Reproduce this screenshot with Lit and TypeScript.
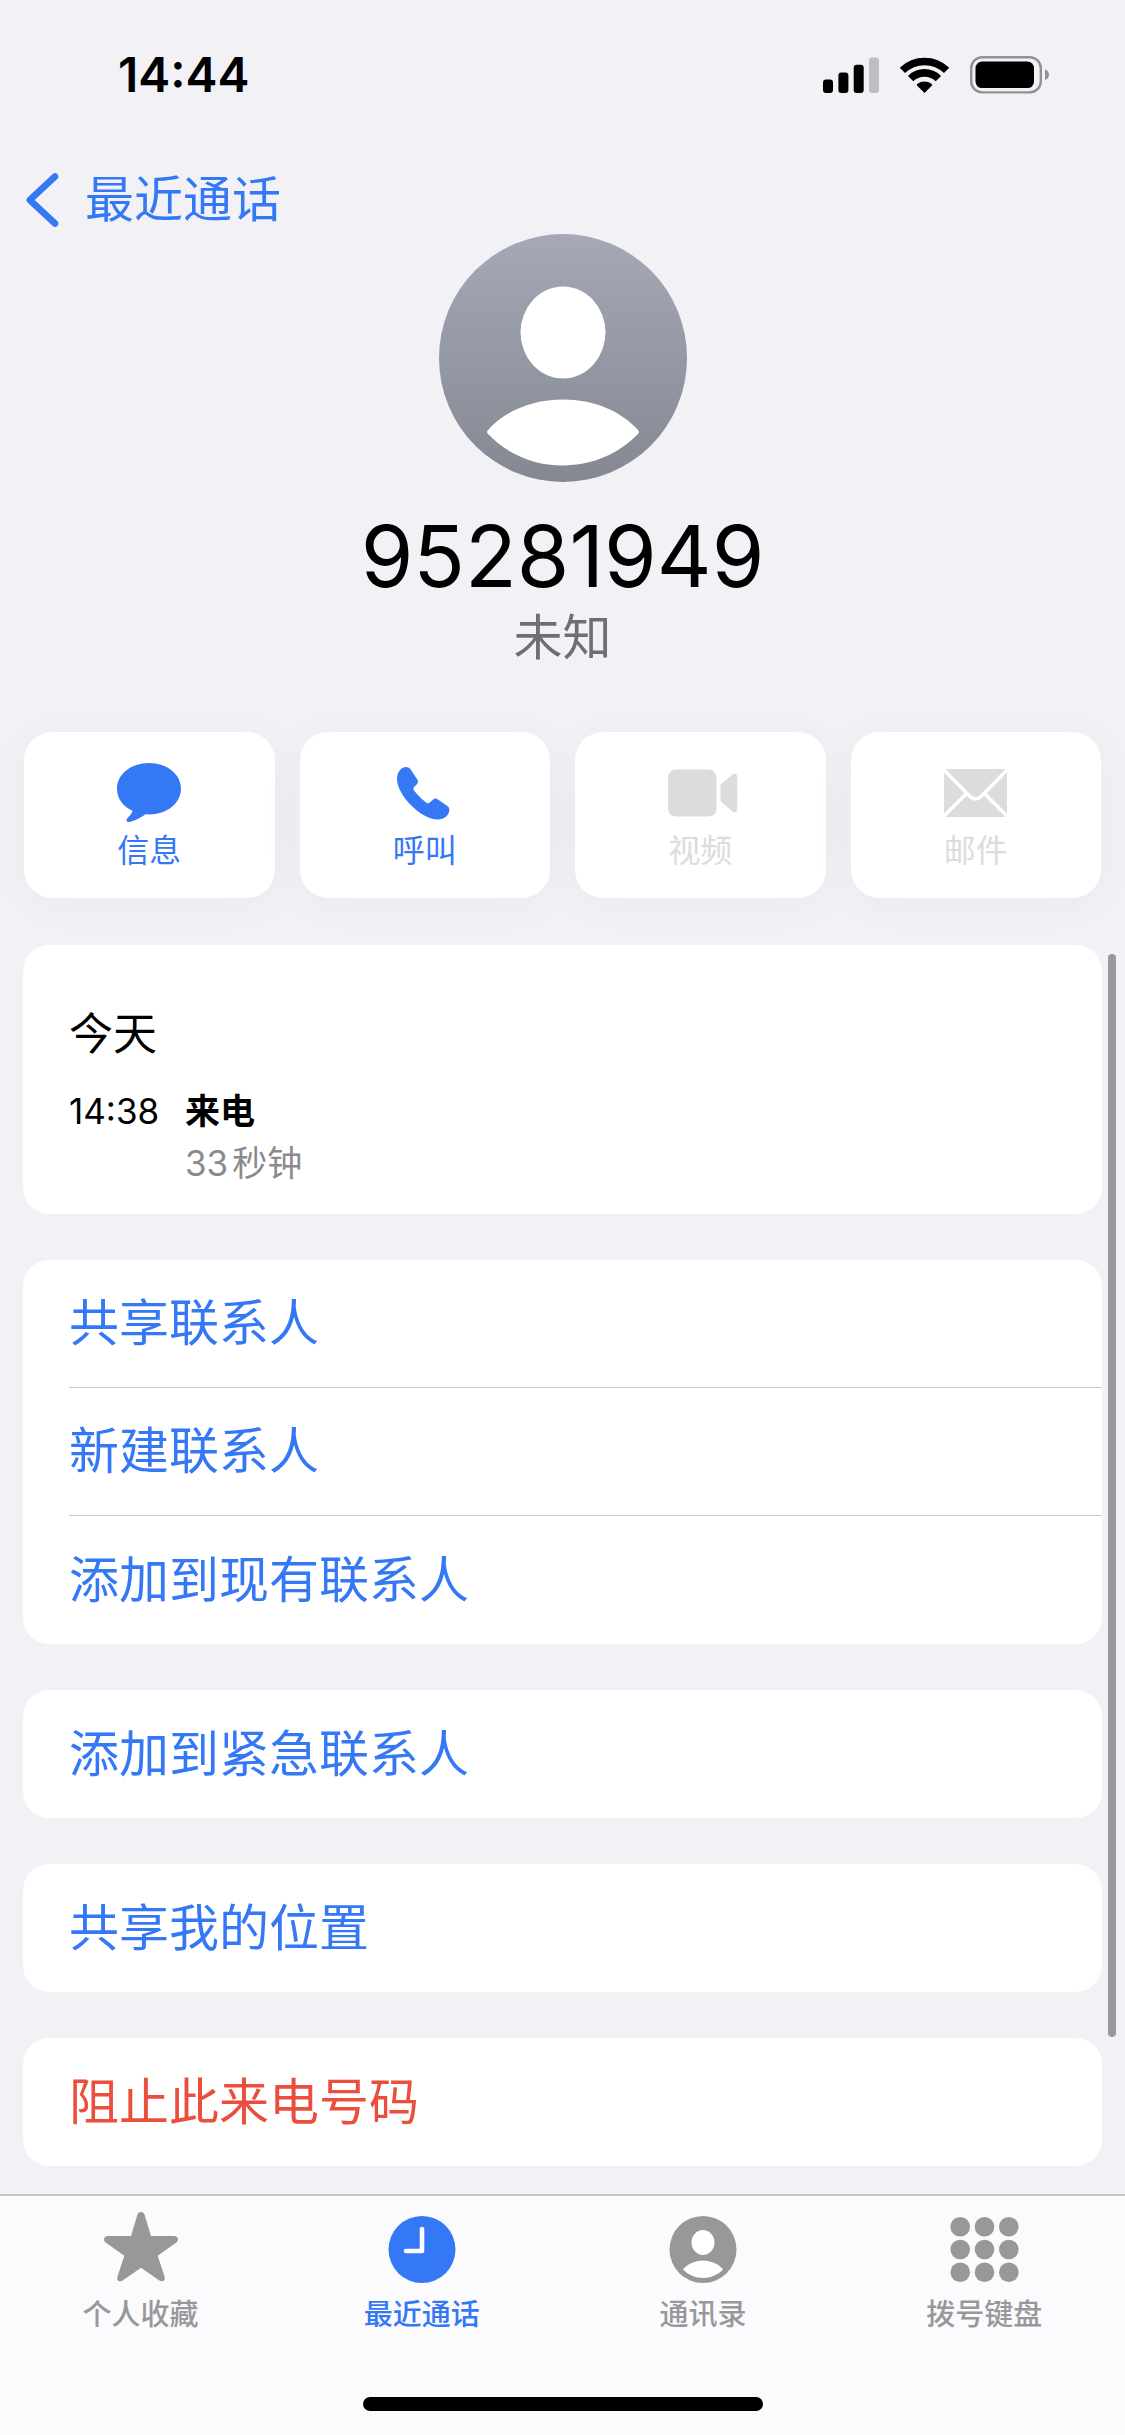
import { LitElement, html, css, svg } from "lit";
import { customElement } from "lit/decorators.js";
import { classMap } from "lit/directives/class-map.js";

const icons = {
  message: html`<svg width="64" height="60" viewBox="0 0 64 60" fill="currentColor" aria-hidden="true">
    <path d="M32 0C50 0 64 11.3 64 25.7S50 51.4 32 51.4c-1.200 0-2.300 0-3.400-.1C24 54.500 16.500 58.900 11.500 58.900c-2 0-2.700-1.700-1.500-3.200C11.800 53.500 14.500 51.500 15.600 47.800 6 43.400 0 35.600 0 25.700 0 11.300 14 0 32 0z"/>
  </svg>`,
  phone: html`<svg width="55" height="53" viewBox="0 0 55 53" fill="currentColor" aria-hidden="true">
    <path d="M9 0c2 0 3.800.9 5 2.900l6.300 9.600c1.100 1.800.8 3.300-.6 4.900L17.100 20c-.9 1-1 2-.3 3.100 2.300 3.600 9.200 10.400 12.800 12.800 1.100.7 2.200.6 3.100-.3l2.900-2.700c1.600-1.500 3.500-1.700 5.300-.5l9.100 6.300c2 1.300 2.600 3.100 2.300 5.100-.7 4.600-5.200 8.800-11.200 8.800C24 52.600 0 28 0 12 0 5 4 0 9 0z"/>
  </svg>`,
  video: html`<svg width="75" height="48" viewBox="-5 0 75 48" fill="currentColor" aria-hidden="true">
    <rect x="0" y="0.500" width="48.500" height="47" rx="8"/>
    <path d="M53.800 14.600c-.9.800-1.300 1.500-1.300 2.600v13.600c0 1.100.4 1.800 1.300 2.600L64 42.300c2.300 1.900 5.200 1 5.200-1.800v-33c0-2.800-2.900-3.700-5.200-1.800z"/>
  </svg>`,
  mail: html`<svg width="63" height="48" viewBox="0 0 63 48" aria-hidden="true">
    <rect width="63" height="48" rx="2" fill="currentColor"/>
    <g fill="none" stroke="#fff" stroke-width="3.600">
      <path d="M-2 -1L26 27.600q5.500 4.600 11 0L65 -1"/>
      <path d="M-2 49L22.500 24.500M65 49L40.500 24.500"/>
    </g>
  </svg>`,
  star: html`<svg width="74" height="76" viewBox="0 0 74 76" fill="currentColor" aria-hidden="true">
    <path d="M37 0C38.800 0 40 1 40.600 2.800L47 24H69.800C72.500 24 74 25.300 74 27.200 74 28.700 73.300 29.700 72 30.700L53.700 43.700 60.500 64.500C61.500 67.500 60 69.300 57.800 69.300 56.700 69.300 56 69 55 68.300L37 55.700 19 68.300C18 69 17.300 69.300 16.200 69.300 14 69.300 12.500 67.500 13.500 64.500L20.300 43.700 2 30.700C.7 29.700 0 28.700 0 27.200 0 25.300 1.500 24 4.200 24H27L33.400 2.800C34 1 35.200 0 37 0z"/>
  </svg>`,
  clock: html`<svg width="68" height="76" viewBox="0 0 68 76" aria-hidden="true">
    <circle cx="34" cy="37.500" r="33.500" fill="currentColor"/>
    <path d="M34 17V39H18" fill="none" stroke="#fff" stroke-width="4.600" stroke-linecap="round" stroke-linejoin="round"/>
  </svg>`,
  person: html`<svg width="68" height="76" viewBox="0 0 68 76" aria-hidden="true">
    <circle cx="34" cy="37.500" r="33.500" fill="currentColor"/>
    <ellipse cx="34" cy="30.500" rx="11.500" ry="12.500" fill="#fff"/>
    <path d="M14 57.500C18.500 52 26 48.500 34 48.500S49.500 52 54 57.500C48.500 63 41.500 66 34 66S19.500 63 14 57.500z" fill="#fff"/>
  </svg>`,
  keypad: html`<svg width="69" height="76" viewBox="0 0 69 76" fill="currentColor" aria-hidden="true">
    ${[0, 1, 2].map((r) => [0, 1, 2].map((c) => svg`<circle cx=${10.2 + c * 24.3} cy=${14.7 + r * 22.8} r="9.800"/>`))}
  </svg>`,
};

type IconName = keyof typeof icons;

interface Action {
  icon: IconName;
  label: string;
  disabled: boolean;
}

interface Tab {
  icon: IconName;
  label: string;
  href: string;
  current: boolean;
}

const actions: Action[] = [
  { icon: "message", label: "信息", disabled: false },
  { icon: "phone", label: "呼叫", disabled: false },
  { icon: "video", label: "视频", disabled: true },
  { icon: "mail", label: "邮件", disabled: true },
];

const groups: { label: string; danger?: boolean }[][] = [
  [{ label: "共享联系人" }, { label: "新建联系人" }, { label: "添加到现有联系人" }],
  [{ label: "添加到紧急联系人" }],
  [{ label: "共享我的位置" }],
  [{ label: "阻止此来电号码", danger: true }],
];

const tabs: Tab[] = [
  { icon: "star", label: "个人收藏", href: "#favorites", current: false },
  { icon: "clock", label: "最近通话", href: "#recents", current: true },
  { icon: "person", label: "通讯录", href: "#contacts", current: false },
  { icon: "keypad", label: "拨号键盘", href: "#keypad", current: false },
];

@customElement("app-root")
export class AppRoot extends LitElement {
  static styles = css`
    :host {
      --blue: #3478f6;
      --page: #f1f1f6;
      display: flex;
      flex-direction: column;
      min-height: 100vh;
      background: var(--page);
      color: #000;
      font-family: Inter, "Noto Sans CJK SC", sans-serif;
      font-size: 50px;
    }
    * {
      box-sizing: border-box;
    }
    svg {
      display: block;
      flex: none;
    }
    h1, h2, p, ul {
      margin: 0;
      padding: 0;
    }
    button {
      border: 0;
      margin: 0;
      background: none;
      font: inherit;
      color: inherit;
    }
    a {
      color: inherit;
      text-decoration: none;
    }

    .status {
      display: flex;
      align-items: center;
      justify-content: space-between;
      padding: 46px 76px 54px 118px;
      font-size: 48px;
      line-height: 58px;
      font-weight: 600;
    }
    .status-icons {
      display: flex;
      align-items: center;
      gap: 21px;
    }

    .nav {
      display: flex;
      padding: 8px 26px 0;
    }
    .back {
      display: flex;
      align-items: center;
      gap: 26px;
      font-size: 49px;
      line-height: 68px;
      color: var(--blue);
    }

    .hero {
      display: flex;
      flex-direction: column;
      align-items: center;
    }
    .number {
      margin-top: 24px;
      font-size: 85px;
      line-height: 102px;
      font-weight: 400;
    }
    .kind {
      font-size: 49px;
      line-height: 60px;
      color: #6f6f73;
    }

    .actions {
      display: grid;
      grid-template-columns: repeat(4, 1fr);
      gap: 25px;
      padding: 64px 24px 47px;
    }
    .action {
      display: flex;
      flex-direction: column;
      align-items: center;
      gap: 6px;
      padding: 29px 0 27px;
      border-radius: 28px;
      background: #fff;
      box-shadow: 0 6px 48px rgba(0, 0, 0, 0.04);
      color: var(--blue);
      font-size: 32px;
      line-height: 40px;
    }
    .action:disabled {
      color: #dcdcdc;
    }
    .action-icon {
      display: flex;
      align-items: center;
      height: 64px;
    }

    .content {
      flex: 1;
      position: relative;
      display: flex;
      flex-direction: column;
      gap: 46px;
      padding: 0 23px 28px;
    }
    .scrollbar {
      position: absolute;
      top: 9px;
      right: 9px;
      bottom: 157px;
      width: 8px;
      border-radius: 4px;
      background: #99999d;
    }
    .card {
      border-radius: 26px;
      background: #fff;
    }
    .log {
      padding: 60px 46px 25px;
    }
    .day {
      margin-bottom: 22px;
      font-size: 44px;
      line-height: 58px;
      font-weight: 400;
    }
    .call {
      display: grid;
      grid-template-columns: 116px 1fr;
      font-size: 35px;
      line-height: 52px;
    }
    .call-type {
      font-weight: 700;
    }
    .call-length {
      grid-column: 2;
      display: flex;
      gap: 4px;
      color: #8a8a8e;
    }

    .rows {
      list-style: none;
      padding-left: 46px;
    }
    .row {
      display: block;
      width: 100%;
      padding: 0;
      line-height: 128px;
      text-align: left;
      color: var(--blue);
    }
    .divided {
      border-bottom: 1px solid #c9c9cc;
      line-height: 127px;
    }
    .danger {
      color: #eb4e3d;
    }

    .tabbar {
      border-top: 2px solid #c6c6c9;
      background: #fbfbfd;
      padding: 16px 0 24px;
    }
    .tabs {
      display: grid;
      grid-template-columns: repeat(4, 1fr);
    }
    .tab {
      display: flex;
      flex-direction: column;
      align-items: center;
      gap: 9px;
      color: #98989a;
      font-size: 29px;
      line-height: 36px;
      font-weight: 500;
    }
    .current {
      color: var(--blue);
    }
    .home {
      width: 400px;
      max-width: 60%;
      height: 14px;
      margin: 64px auto 0;
      border-radius: 7px;
      background: #000;
    }
  `;

  render() {
    return html`
      <header class="status">
        <span>14:44</span>
        <div class="status-icons">
          <svg width="56" height="36" viewBox="0 0 56 36" aria-hidden="true">
            <rect x="0" y="22.500" width="10" height="13.500" rx="3"/>
            <rect x="15.400" y="15.500" width="10" height="20.500" rx="3"/>
            <rect x="30.700" y="7.800" width="10" height="28.200" rx="3"/>
            <rect x="46" y="0.500" width="10" height="35.500" rx="3" fill="#bfbfc3"/>
          </svg>
          <svg width="49" height="36" viewBox="0 0 49 36" aria-hidden="true">
            <g fill="none" stroke="#000" stroke-width="7.600">
              <path d="M2.400 13.400A31.700 31.700 0 0 1 46.600 13.400"/>
              <path d="M10.600 21.600A19.700 19.700 0 0 1 38.400 21.600"/>
            </g>
            <path d="M24.500 36L17 28.500Q16.400 27.600 17.200 27A12 12 0 0 1 31.800 27Q32.600 27.600 32 28.500z"/>
          </svg>
          <svg width="79" height="38" viewBox="0 0 79 38" aria-hidden="true">
            <rect x="1.200" y="1.200" width="69.600" height="35.200" rx="11" fill="none" stroke="#929296" stroke-width="2.400"/>
            <rect x="5.500" y="5.500" width="58.500" height="26.600" rx="6.500"/>
            <path d="M75 13.500c2.500.7 4 2.800 4 5.300s-1.500 4.600-4 5.300z" fill="#929296"/>
          </svg>
        </div>
      </header>

      <nav class="nav">
        <a class="back" href="#recents">
          <svg width="33" height="54" viewBox="0 0 33 54" aria-hidden="true">
            <path d="M29 3.500L3.800 27 29 50.500" fill="none" stroke="currentColor" stroke-width="6.600" stroke-linecap="round" stroke-linejoin="round"/>
          </svg>
          <span>最近通话</span>
        </a>
      </nav>

      <section class="hero">
        <svg width="248" height="248" viewBox="0 0 248 248" aria-hidden="true">
          <defs>
            <linearGradient id="shade" x1="0" y1="0" x2="0" y2="1">
              <stop offset="0" stop-color="#a5a9b7"/>
              <stop offset="1" stop-color="#848892"/>
            </linearGradient>
          </defs>
          <circle cx="124" cy="124" r="124" fill="url(#shade)"/>
          <ellipse cx="124" cy="98.500" rx="42.500" ry="46" fill="#fff"/>
          <path d="M48.600 196.400C66 177 93 165.500 124 165.500s58 11.500 75.400 30.900q1.200 1.600 0 3.200C180 220 153 231.500 124 231.500S68 220 48.600 199.600q-1.200-1.600 0-3.200z" fill="#fff"/>
        </svg>
        <h1 class="number">95281949</h1>
        <p class="kind">未知</p>
      </section>

      <div class="actions">
        ${actions.map(
          (a) => html`<button class="action" type="button" ?disabled=${a.disabled}>
            <span class="action-icon">${icons[a.icon]}</span>
            <span>${a.label}</span>
          </button>`
        )}
      </div>

      <main class="content">
        <section class="card log">
          <h2 class="day">今天</h2>
          <div class="call">
            <span>14:38</span>
            <span class="call-type">来电</span>
            <span class="call-length"><span>33</span><span>秒钟</span></span>
          </div>
        </section>
        ${groups.map(
          (rows) => html`<ul class="card rows">
            ${rows.map(
              (r, i) => html`<li>
                <button
                  type="button"
                  class=${classMap({ row: true, danger: !!r.danger, divided: i < rows.length - 1 })}
                >${r.label}</button>
              </li>`
            )}
          </ul>`
        )}
        <div class="scrollbar" aria-hidden="true"></div>
      </main>

      <footer class="tabbar">
        <nav class="tabs">
          ${tabs.map(
            (t) => html`<a
              class=${classMap({ tab: true, current: t.current })}
              href=${t.href}
              aria-current=${t.current ? "page" : "false"}
            >${icons[t.icon]}<span>${t.label}</span></a>`
          )}
        </nav>
        <div class="home"></div>
      </footer>
    `;
  }
}
